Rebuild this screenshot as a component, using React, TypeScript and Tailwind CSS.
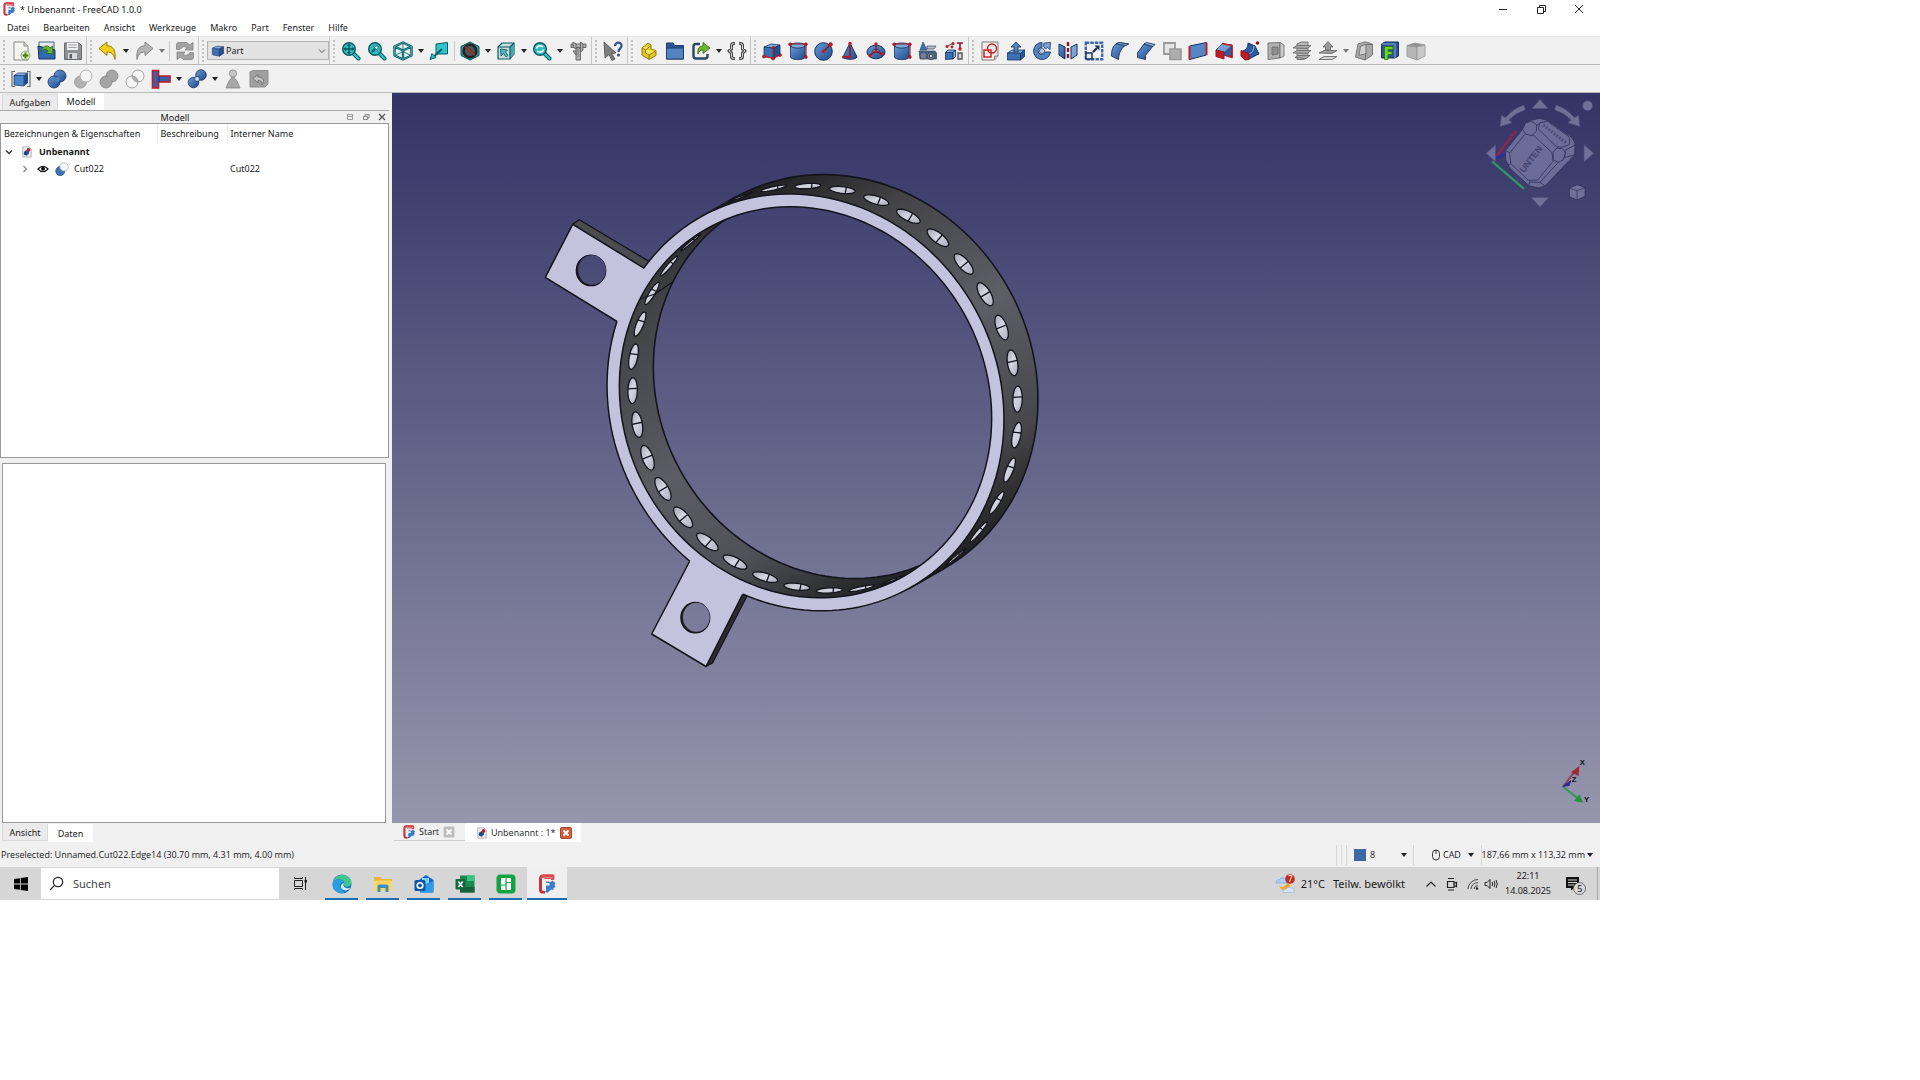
import React from "react";

const B = "#3d70b2";
const D = "#16335f";
const L = "#7dabdd";
const R = "#c01c28";
const RD = "#8f1420";
const T = "#16a3a8";
const TD = "#0b5a60";
const G = "#9a9a9a";
const GD = "#6e6e6e";

function Ic({ children, box = "0 0 20 20", className = "size-5" }: { children: React.ReactNode; box?: string; className?: string }) {
  return (
    <svg viewBox={box} className={className} aria-hidden="true">
      {children}
    </svg>
  );
}

function CubeShape({ a = L, b = B, c = "#24508e", s = D }: { a?: string; b?: string; c?: string; s?: string }) {
  return (
    <g stroke={s} strokeWidth="0.8" strokeLinejoin="round">
      <path d="M2 6 L12 7 L12 17.500 L2 15.500 Z" fill={b} />
      <path d="M2 6 L9 3 L18 4 L12 7 Z" fill={a} />
      <path d="M12 7 L18 4 L18 13.500 L12 17.500 Z" fill={c} />
    </g>
  );
}

function CylShape() {
  return (
    <g stroke={D} strokeWidth="0.8">
      <path d="M2.500 5 V16 C2.500 19.500 17 19.500 17 16 V5" fill="url(#icoBlue)" />
      <ellipse cx="9.750" cy="4.500" rx="7.250" ry="2.600" fill={L} />
      <path d="M2 3 H18 V16" stroke={RD} strokeWidth="1.100" fill="none" />
      <g fill={R} stroke={RD} strokeWidth="0.500">
        <circle cx="2.200" cy="3.300" r="1.600" />
        <circle cx="17.800" cy="3.300" r="1.600" />
        <circle cx="17.800" cy="16" r="1.600" />
      </g>
    </g>
  );
}

function Magnifier({ children }: { children?: React.ReactNode }) {
  return (
    <g>
      <path d="M12 12 L17.500 17.500" stroke={TD} strokeWidth="4" strokeLinecap="round" />
      <path d="M12 12 L17.500 17.500" stroke="#2cc4c8" strokeWidth="2.200" strokeLinecap="round" />
      <circle cx="8" cy="8" r="6.300" fill="#33b9bd" stroke={TD} strokeWidth="1.400" />
      {children}
    </g>
  );
}

function Fc() {
  return (
    <g strokeLinejoin="round">
      <path d="M16 2 H6 Q4 2 3.500 4 V16 Q3.500 18 5.500 18 H8" fill="none" stroke="#c8323c" strokeWidth="3" />
      <path d="M3.500 5 L6 1.500 H16.500 V5 H8 V8 H12" fill="none" stroke="#dc4c50" strokeWidth="1.800" />
      <path d="M8.500 8 H14 L15.500 6.500 L17 8 L18.500 9 L17.500 11 L18.500 13 L16.500 14 L16.500 16 L14 15.500 L12 17.500 L11 18.500 H8.500 Z" fill="#3b7cc9" />
      <path d="M6.500 5 H14 V7.500 H9 V9 H12.500 V11.500 H9 V17 H6.500 Z" fill="#f1f1f6" />
    </g>
  );
}

function Doc() {
  return (
    <g>
      <path d="M3 1.500 H13 L17 5 V18.500 H3 Z" fill="#eef0f4" stroke="#84888f" />
      <path d="M6 9 L10 7 L13 9 V13 L9 16 L6 14 Z" fill="#2d4f94" stroke={D} strokeWidth="0.600" />
      <circle cx="12.500" cy="6.500" r="3" fill={R} />
      <circle cx="7.500" cy="12" r="3" fill="#274684" />
    </g>
  );
}

const I: Record<string, React.ReactNode> = {
  new: (
    <g>
      <path d="M3 1 H13 L17 5 V19 H3 Z" fill="#f4f4f2" stroke="#8a8c88" />
      <path d="M13 1 V5 H17" fill="#d4d4d0" stroke="#8a8c88" />
      <circle cx="14.500" cy="14.500" r="4.500" fill="#dfeec8" stroke="#76924a" strokeWidth="0.700" />
      <path d="M14.500 11.500 V17.500 M11.500 14.500 H17.500" stroke="#4e7d16" strokeWidth="2" />
    </g>
  ),
  open: (
    <g>
      <path d="M2 1 H17 V10 H2 Z" fill="#e8ecf0" stroke="#44688c" />
      <path d="M1 5 L2 18 H18 V9 Z" fill="#2f69b0" stroke={D} />
      <path d="M4 11 C5 5 11 3 13 7 L15.500 5 L16 13 L9 12 L11 10 C9 7 6 8 4 11 Z" fill="#67b32e" stroke="#2c6410" strokeWidth="0.800" />
    </g>
  ),
  save: (
    <g>
      <path d="M1.500 2 H16 L18.500 4.500 V18.500 H1.500 Z" fill="#8e9094" stroke="#66686c" />
      <path d="M4 2 H15 V9 H4 Z" fill="#efefef" />
      <path d="M5.500 4 H13.500 M5.500 6.500 H13.500" stroke="#a0a0a0" />
      <path d="M5 12 H14 V18 H5 Z" fill="#d9d9d9" />
      <path d="M6.500 13 H9 V17.500 H6.500 Z" fill="#5c5e62" />
    </g>
  ),
  undo: <path d="M1 7.500 L9 1 V4.800 C15 4.800 18 9 17 18.500 C15.500 13 13.500 11 9 11 V14.500 Z" fill="#f0cf1d" stroke="#97800a" strokeLinejoin="round" />,
  redo: <path d="M19 7.500 L11 1 V4.800 C5 4.800 2 9 3 18.500 C4.500 13 6.500 11 11 11 V14.500 Z" fill="#b4b4b4" stroke="#888" strokeLinejoin="round" />,
  refresh: (
    <g fill="#a3a3a3" stroke="#828282" strokeWidth="0.800">
      <path d="M1.500 8.500 V3.500 Q1.500 1.500 4 1.500 H12 L14.500 4 L18 1.500 V9 H10 L12 6.500 Q8 4 5 8.500 Z" />
      <path d="M18.500 11.500 V16.500 Q18.500 18.500 16 18.500 H8 L5.500 16 L2 18.500 V11 H10 L8 13.500 Q12 16 15 11.500 Z" />
    </g>
  ),
  fit: (
    <Magnifier>
      <path d="M8 3.500 V12.500 M3.500 8 H12.500" stroke={TD} strokeWidth="1.300" />
      <path d="M8 2.500 L10 5 H6 Z M8 13.500 L10 11 H6 Z M2.500 8 L5 6 V10 Z M13.500 8 L11 6 V10 Z" fill={TD} />
    </Magnifier>
  ),
  fitsel: (
    <Magnifier>
      <path d="M5 11 L8 8" stroke={TD} strokeWidth="1.800" />
      <path d="M11 5 L10.500 9.500 L6.500 5.500 Z" fill="#e8ffff" stroke={TD} strokeWidth="0.700" />
    </Magnifier>
  ),
  iso: (
    <g fill="none" stroke={TD} strokeLinejoin="round">
      <path d="M1.500 5.500 L10 1.500 L18.500 5.500 V14.500 L10 18.500 L1.500 14.500 Z" fill="#e4f1f1" />
      <path d="M1.500 5.500 L10 1.500 L18.500 5.500 V14.500 L10 18.500 L1.500 14.500 Z M1.500 5.500 L10 9.500 L18.500 5.500 M10 9.500 V18.500" strokeWidth="2.400" />
      <path d="M1.500 5.500 L10 1.500 L18.500 5.500 V14.500 L10 18.500 L1.500 14.500 Z M1.500 5.500 L10 9.500 L18.500 5.500 M10 9.500 V18.500" stroke="#48bfc1" strokeWidth="0.700" />
      <path d="M10 2 V9 M3 14 L10 10.500 L17 14" strokeWidth="0.800" />
    </g>
  ),
  viewsel: (
    <g strokeLinejoin="round">
      <path d="M7 3 L18.500 1.500 V13 H7 Z" fill="#2bc5cb" stroke={TD} />
      <path d="M13 8 L5 15.500" stroke={TD} strokeWidth="1.800" />
      <path d="M1 18.500 L3 12.500 L7 16.500 Z" fill="#2bc5cb" stroke={TD} />
    </g>
  ),
  noentry: (
    <g>
      <path d="M1 5.500 L10 1 L19 5.500 V14.500 L10 19 L1 14.500 Z" fill="#2f9195" stroke={TD} />
      <circle cx="10" cy="10" r="6.300" fill="#47575a" stroke="#262223" strokeWidth="2.600" />
      <path d="M5.500 6 L14.500 14" stroke="#7f2a2a" strokeWidth="2.800" />
      <path d="M5.500 6 L14.500 14" stroke="#b5443d" strokeWidth="1" />
    </g>
  ),
  boxsel: (
    <g strokeLinejoin="round">
      <path d="M2 6 L6 2 H18 V13 L14 18 H2 Z" fill="#c7dcdc" stroke={TD} strokeWidth="1.200" />
      <path d="M14 6 L18 2 V13 L14 18 Z" fill="#4aa9ac" />
      <path d="M2 6 H14 V18 M14 6 L18 2" fill="none" stroke={TD} strokeWidth="1.200" />
      <path d="M4.500 8 L11.500 9 L9.500 11 L12 14.500 L10 16 L7.500 12.500 L5 15 Z" fill="#55b5b7" stroke={TD} strokeWidth="0.800" />
    </g>
  ),
  sync: (
    <Magnifier>
      <path d="M4.500 7.500 C5 4.500 9 4 11 6 M11.500 8.500 C11 11.500 7 12 5 10" fill="none" stroke="#e8ffff" strokeWidth="1.700" />
    </Magnifier>
  ),
  caliper: (
    <g fill="#b0b0b0" stroke="#5f5f5f" strokeWidth="0.900">
      <path d="M8 7 H12.500 V19 H8 Z" />
      <path d="M3 3 H18 V6.500 H3 Z" />
      <path d="M5 1 L8 3 V8 L5 6 Z M12.500 1 L15 3 V9 L12.500 11 Z M5 10 H8 V14 Z" />
      <path d="M9.500 9 H11 M9.500 11 H11 M9.500 13 H11 M9.500 15 H11" />
    </g>
  ),
  whats: (
    <g>
      <path d="M1 1 L13 12 L8.500 12.500 L12 18 L9 19.500 L6 13.500 L2 17 Z" fill="#7d7d7d" stroke="#4e4e4e" strokeWidth="0.800" />
      <path d="M12 5 C12 0.500 19 0.500 18.500 5 C18.300 7.500 15.500 7.500 15.500 11" fill="none" stroke="#33518a" strokeWidth="2.200" />
      <circle cx="15.500" cy="14" r="1.500" fill="#33518a" />
    </g>
  ),
  part: (
    <g stroke="#857208" strokeWidth="0.900" strokeLinejoin="round">
      <path d="M3 7 L9 2 L12 4 V8 L17 9.500 V14.500 L10 18.500 L3 14 Z" fill="#e3c822" />
      <path d="M3 7 L6.500 9 L12 4.500 M6.500 9 V12 L10 14 L17 9.800 M10 14 V18.500" fill="#f8e75c" />
    </g>
  ),
  folder: (
    <g>
      <path d="M1.500 2 H8 L9.500 4.500 H18.500 V18 H1.500 Z" fill="#2b5592" stroke="#1d3f70" />
      <path d="M1.500 7 H18.500 V18 H1.500 Z" fill="#5583c0" stroke="#1d3f70" />
    </g>
  ),
  link: (
    <g>
      <path d="M9 3 H5 Q2.500 3 2.500 5.500 V15 Q2.500 17.500 5 17.500 H14 Q16.500 17.500 16.500 15 V13" fill="none" stroke="#2e4468" strokeWidth="2.400" />
      <path d="M7 13 C6 7 9 5 12 5 V1.500 L19 7 L12 12.500 V9 C9.500 9 8 10 7 13 Z" fill="#6fb92e" stroke="#35650f" strokeWidth="0.800" />
    </g>
  ),
  braces: (
    <g fill="none" strokeLinejoin="round">
      <path d="M8 2.500 H6.500 Q4.500 2.500 4.500 4.500 V8 L2 10 L4.500 12 V15.500 Q4.500 17.500 6.500 17.500 H8 M12 2.500 H13.500 Q15.500 2.500 15.500 4.500 V8 L18 10 L15.500 12 V15.500 Q15.500 17.500 13.500 17.500 H12" stroke="#444" strokeWidth="3" />
      <path d="M7.500 2.500 H6.500 Q4.500 2.500 4.500 4.500 V8 L2 10 L4.500 12 V15.500 Q4.500 17.500 6.500 17.500 H7.500 M12.500 2.500 H13.500 Q15.500 2.500 15.500 4.500 V8 L18 10 L15.500 12 V15.500 Q15.500 17.500 13.500 17.500 H12.500" stroke="#d8d8d8" strokeWidth="1" />
    </g>
  ),
  pcube: (
    <g>
      <CubeShape />
      <path d="M2 15.500 L11 17 L18.500 14 M11 17 V7" fill="none" stroke={R} />
      <g fill={R} stroke={RD} strokeWidth="0.500">
        <circle cx="2" cy="15.500" r="1.600" />
        <circle cx="11" cy="17.500" r="1.600" />
        <circle cx="18" cy="14" r="1.600" />
        <circle cx="11.500" cy="6.500" r="1.200" />
      </g>
    </g>
  ),
  cyl: <CylShape />,
  sphere: (
    <g>
      <circle cx="9.500" cy="10.500" r="8.800" fill="url(#icoBlue)" stroke={D} />
      <path d="M9.500 10.500 L16.500 3.500" stroke={RD} strokeWidth="1.600" />
      <circle cx="9.500" cy="10.500" r="1.800" fill={R} />
      <circle cx="16.500" cy="3.500" r="2" fill={R} stroke={RD} strokeWidth="0.500" />
    </g>
  ),
  cone: (
    <g>
      <path d="M10 2 L3 16 C4 19 16 19 17 16 Z" fill="url(#icoBlue)" stroke={D} />
      <path d="M10 2 V16 H3.500" stroke={RD} strokeWidth="1.500" fill="none" />
      <circle cx="10" cy="2.500" r="1.700" fill={R} />
      <circle cx="10" cy="16" r="1.700" fill={R} />
      <circle cx="3.500" cy="16.300" r="1.500" fill={R} />
    </g>
  ),
  torus: (
    <g>
      <ellipse cx="10" cy="11" rx="9" ry="6.800" fill="url(#icoBlue)" stroke={D} />
      <ellipse cx="10" cy="10" rx="3.500" ry="1.500" fill="#b9c8dd" stroke={D} />
      <path d="M10 3 V10 L4 14 M10 10 L16 13" stroke={RD} strokeWidth="1.400" fill="none" />
      <g fill={R}>
        <circle cx="10" cy="3" r="1.700" />
        <circle cx="10" cy="10" r="1.500" />
        <circle cx="4" cy="14.500" r="1.700" />
        <circle cx="16.500" cy="13" r="1.700" />
      </g>
    </g>
  ),
  prims: (
    <g strokeWidth="0.700" stroke="#3a4756">
      <path d="M5 1 L2 9 H9 Z" fill={B} />
      <path d="M9 5 H18 L16 8 H9 Z" fill="#b8c0c6" />
      <path d="M1 10 H17 L18.500 12 V18 H2 Z" fill="#43699c" />
      <circle cx="5.500" cy="14.500" r="3.500" fill="#6c7f96" />
      <circle cx="13" cy="15" r="3.800" fill="#66727e" />
      <circle cx="13" cy="15" r="1.600" fill="#c9ced3" />
    </g>
  ),
  shapebuilder: (
    <g>
      <path d="M1.500 11.500 L9 11 V18 L1.500 18.500 Z" fill={B} stroke={D} strokeWidth="0.800" />
      <path d="M1.500 11.500 L4 9 H11.500 L9 11.500 Z M9 11.500 L11.500 9 V15.500 L9 18 Z" fill={L} stroke={D} strokeWidth="0.800" />
      <path d="M13 2 H19 M16 2 V7" stroke={RD} strokeWidth="1.600" />
      <path d="M14 12 H18 V18 H14 Z" fill="#d5d7d9" stroke="#555" strokeWidth="1.400" />
      <path d="M3 5 L9.500 2.500" stroke="#666" strokeWidth="1.200" />
      <g fill={R}>
        <circle cx="3" cy="5.500" r="1.500" />
        <circle cx="9" cy="2.500" r="1.500" />
        <circle cx="8" cy="6" r="1.400" />
        <circle cx="16" cy="8" r="1.700" />
      </g>
    </g>
  ),
  sketch: (
    <g>
      <path d="M2 1 H18 V15 L14.500 19 H2 Z" fill="#f6eceb" stroke="#7b7b7b" />
      <path d="M18 15 H14.500 V19" fill="#cfcfcf" stroke="#7b7b7b" />
      <circle cx="12" cy="7.500" r="4.500" fill="none" stroke="#c9282c" strokeWidth="1.500" />
      <path d="M4 9 H11 V16 H4 Z" fill="none" stroke="#c9282c" strokeWidth="1.500" />
    </g>
  ),
  extrude: (
    <g stroke={D} strokeWidth="0.800" strokeLinejoin="round">
      <path d="M1.500 12 L6 9 H18.500 L14.500 12.500 Z" fill={L} />
      <path d="M1.500 12 H14.500 V19 H1.500 Z" fill={B} />
      <path d="M14.500 12.500 L18.500 9 V15.500 L14.500 19 Z" fill="#2a5796" />
      <path d="M10 1 L15 6 H12 V11 H8 V6 H5 Z" fill="#4d82c0" />
    </g>
  ),
  revolve: (
    <g>
      <path d="M10 1.500 A8.500 8.500 0 1 0 18.500 11 L13 11 A3.500 3.500 0 1 1 10 6.500 Z" fill="#5386c2" stroke={D} strokeWidth="0.900" />
      <path d="M12 2 L18.500 1.500 L18 8.500 L15.500 6.500 L13.500 8 L11.500 5 Z" fill="#7ba6d8" stroke={D} strokeWidth="0.800" />
      <circle cx="10" cy="10" r="2.500" fill="#c5d4e6" stroke={D} strokeWidth="0.700" />
    </g>
  ),
  mirror: (
    <g>
      <path d="M1 3 L7 6 V18 L1 14 Z" fill="url(#icoBlue)" stroke={D} />
      <path d="M19 3 L13 6 V18 L19 14 Z" fill="#7ba6d8" stroke={D} />
      <path d="M10 1 V19" stroke={RD} strokeWidth="2.400" strokeDasharray="4 2" />
    </g>
  ),
  scale: (
    <g>
      <path d="M1.800 1.800 H18.200 V18.200 H1.800 Z" fill="none" stroke="#3f6aa8" strokeWidth="2.400" strokeDasharray="3.500 1" />
      <path d="M2 12 H8 V18 H2 Z" fill="#e9edf2" stroke={D} strokeWidth="1.500" />
      <path d="M9 11 L13 7" stroke={D} strokeWidth="2.400" />
      <path d="M10.500 4.500 H15.500 V9.500 Z" fill={D} />
    </g>
  ),
  fillet: (
    <g stroke={D} strokeWidth="0.900" strokeLinejoin="round">
      <path d="M1.500 15 C1.500 7 4 3 9 1.500 L18.500 3 C13 5 9 9 8.500 18.500 Z" fill="url(#icoBlue)" />
      <path d="M9 1.500 L18.500 3 L16 4.500 L6 3 Z" fill="#9dbde2" />
    </g>
  ),
  chamfer: (
    <g stroke={D} strokeWidth="0.900" strokeLinejoin="round">
      <path d="M1.500 12 L8 3 L17 5 L9.500 14.500 V18.500 L1.500 16.500 Z" fill="url(#icoBlue)" />
      <path d="M8 3 L10.500 1.500 L19 3.500 L17 5.500 Z" fill="#9dbde2" />
    </g>
  ),
  face: (
    <g>
      <path d="M2 2 H13 V13 H2 Z" fill="#e4e4e4" stroke={G} strokeWidth="1.800" />
      <path d="M8 8 H19 V18.500 H8 Z" fill="#adadad" stroke={G} strokeWidth="1.600" />
    </g>
  ),
  ruled: (
    <g>
      <path d="M1.500 5 L18.500 1.500 V14 L1.500 18.500 Z" fill="#5587c6" stroke={D} />
      <path d="M1.500 5 V18.500 M18.500 1.500 V14" stroke={R} strokeWidth="2" />
    </g>
  ),
  loft: (
    <g strokeLinejoin="round">
      <path d="M2 9 L8 3 L18 4 V16 L10 14 Z" fill="#2c5ba0" stroke={D} />
      <path d="M8 3 L18 4 L10 11 L2 9 Z" fill="#7ba0cf" />
      <path d="M2 9 L10 11 V18 L2 15.500 Z" fill={R} stroke={RD} />
      <path d="M8 2.500 L18 4.500 V16.500 L12 14.500" fill="none" stroke={R} strokeWidth="1.600" />
    </g>
  ),
  sweep: (
    <g strokeLinejoin="round">
      <path d="M3 10 C7 8 8 6 8 2 L15 5 L19 13 C16 14 13 16 9 18 Z" fill="#2c5ba0" stroke={D} />
      <path d="M9 13 C12 12 14 9 14 5" stroke="#87aede" fill="none" />
      <path d="M1 9.500 L9 12.500 V18.500 L5 19 L1 15 Z" fill={R} stroke={RD} />
      <circle cx="17.500" cy="2" r="1.800" fill={RD} />
    </g>
  ),
  section: (
    <g stroke={GD} strokeWidth="0.900">
      <path d="M2 2 L14 1.500 V17 L2 18.500 Z" fill="#b0b0b0" />
      <path d="M14 1.500 L18 4 V15 L14 17 Z" fill="#cdcdcd" />
      <path d="M6 6 H12 V13 L6 14 Z" fill="#8f8f8f" />
    </g>
  ),
  cross: (
    <g stroke={GD} strokeWidth="0.900">
      <path d="M5 3 L9 1 H16 V15 L12 18.500 H5 Z" fill="#b8b8b8" />
      <path d="M1 7 L5 4.500 H19 L15 7.500 Z M1 12 L5 9.500 H19 L15 12.500 Z M3 16.500 L6 14.500 H18 L14 17.500 Z" fill="#a6a6a6" />
    </g>
  ),
  offset: (
    <g stroke={GD} strokeWidth="0.900">
      <path d="M10 0.500 L15 6 H12.500 V9 H7.500 V6 H5 Z" fill={G} />
      <path d="M1 12 L6 9.500 H19 L14 12.500 Z" fill="#9e9e9e" />
      <path d="M1 18.500 L6 15.500 H19 L14 18.500 Z" fill="#d2d2d2" />
    </g>
  ),
  thick: (
    <g stroke={GD} strokeWidth="0.900" strokeLinejoin="round">
      <path d="M4 3 L11 0.800 L18.500 3 V14 L11 19 L1.500 16 Z" fill="#a9a9a9" />
      <path d="M6.500 5 L12 3.500 V12.500 L5 14.500 Z" fill="#d0d0d0" />
      <path d="M12 3.500 L18 3.500 M12 12.500 L11 19" />
    </g>
  ),
  projface: (
    <g>
      <path d="M1.500 3 L5 1 H18.500 V15 L15 17 H1.500 Z" fill="#2c5793" stroke={D} />
      <path d="M1.500 3 H15 V17" stroke="#88a9d4" fill="none" />
      <path d="M4.500 5.500 H13 V8.500 H8 V10.500 H12 V13.500 H8 V18.500 H4.500 Z" fill="#6ed321" stroke="#2d7309" strokeWidth="0.800" />
    </g>
  ),
  gcube: (
    <g stroke={G} strokeWidth="0.900" strokeLinejoin="round">
      <path d="M1 4.500 L11 6 V19 L1 15.500 Z" fill="#b6b6b6" />
      <path d="M1 4.500 L9 2 L19 4 L11 6 Z" fill="#8e8e8e" />
      <path d="M11 6 L19 4 V15 L11 19 Z" fill="#c9c9c9" />
    </g>
  ),
  compound: (
    <g>
      <path d="M4 2.500 H1 V17.500 H4 M16 2.500 H19 V17.500 H16" fill="none" stroke="#6c6c6c" strokeWidth="1.200" />
      <path d="M3 6.500 H13 V17 L3 16 Z" fill="#4684cc" stroke={D} strokeWidth="0.700" />
      <path d="M3 6.500 L7 4 H17 L13 6.500 Z" fill="#8ab5e6" stroke={D} strokeWidth="0.700" />
      <path d="M13 6.500 L17 4 V14 L13 17 Z" fill="#214c86" />
    </g>
  ),
  boolean: (
    <g stroke={D} strokeWidth="0.800">
      <circle cx="13" cy="7" r="6" fill="url(#icoBlue)" />
      <circle cx="7" cy="13" r="6" fill="url(#icoBlue)" />
      <path d="M9 9 L12 12" stroke="#4d83c3" strokeWidth="4" />
    </g>
  ),
  cut: (
    <g strokeWidth="0.900">
      <circle cx="7.500" cy="13" r="6" fill="#b2b2b2" stroke={G} />
      <circle cx="13" cy="7" r="6" fill="#f4f4f4" stroke="#a8a8a8" />
    </g>
  ),
  union: (
    <g stroke="#8b8b8b" strokeWidth="0.900">
      <circle cx="13" cy="7" r="6" fill="#a5a5a5" />
      <circle cx="7" cy="13" r="6" fill="#a5a5a5" />
      <path d="M9 9 L12 12" stroke="#a5a5a5" strokeWidth="5" />
    </g>
  ),
  common: (
    <g stroke="#9a9a9a" strokeWidth="0.900">
      <circle cx="13" cy="7" r="6" fill="#f4f4f4" />
      <circle cx="7" cy="13" r="6" fill="#f4f4f4" />
      <path d="M7.100 7 A6 6 0 0 1 12.900 13 A6 6 0 0 1 7.100 7 Z" fill="#b2b2b2" />
    </g>
  ),
  pipe: (
    <g>
      <path d="M1.500 1.500 H7.500 V7 H19 V13 H7.500 V19 H1.500 Z" fill="#3c5fa0" stroke={R} strokeWidth="1.700" />
      <path d="M8 7 V13" stroke={D} />
    </g>
  ),
  split: (
    <g stroke={D} strokeWidth="0.800">
      <circle cx="14" cy="6" r="5.300" fill="url(#icoBlue)" />
      <circle cx="6.500" cy="13.500" r="5.300" fill="url(#icoBlue)" />
      <path d="M8 8 C12 7 13 8 12 12 C9 13 7 12 8 8 Z" fill="#cfe0f5" />
    </g>
  ),
  check: (
    <g fill="#a8a8a8" stroke="#848484" strokeWidth="0.800">
      <path d="M10 7 L14 12 L17 19 H3 L6 12 Z" />
      <circle cx="10" cy="4.500" r="3.600" fill="#c6c6c6" />
    </g>
  ),
  defeature: (
    <g>
      <path d="M1 3 L4 1.500 H19 V15 L16 18 H1 Z" fill="#a0a0a0" stroke="#8f8f8f" />
      <path d="M4 9.500 L9 5.500 V8 C14 8 16 11 13 16 C13 12.500 12 11.500 9 11.500 V14 Z" fill="#c4c4c4" stroke="#6a6a6a" strokeWidth="0.800" />
    </g>
  ),
};

function Tool({ n, label, arrow, dim }: { n: string; label: string; arrow?: boolean; dim?: boolean }) {
  return (
    <div className="flex shrink-0 items-center">
      <button aria-label={label} className="flex h-6 w-[26px] items-center justify-center">
        <Ic>{I[n]}</Ic>
      </button>
      {arrow && (
        <button aria-label={label + " Menü"} className="flex h-6 w-[10px] items-center justify-center">
          <Arrow dim={dim} />
        </button>
      )}
    </div>
  );
}

function Arrow({ dim }: { dim?: boolean }) {
  return (
    <svg viewBox="0 0 6 4" className="h-1 w-1.5 shrink-0" aria-hidden="true">
      <path d="M0 0 H6 L3 4 Z" fill={dim ? "#777" : "#222"} />
    </svg>
  );
}

function Group({ children, pad, last }: { children: React.ReactNode; pad?: boolean; last?: boolean }) {
  return (
    <div className={last ? "flex shrink-0 items-center" : pad ? "flex shrink-0 items-center border-r border-[#c6c6c6] pr-px" : "flex shrink-0 items-center border-r border-[#c6c6c6]"}>
      <div className="flex w-2 justify-center">
        <div className="h-[22px] w-0.5 border-l-2 border-dotted border-[#c2c2c2]" />
      </div>
      {children}
    </div>
  );
}

const Sep = () => <div className="mx-0.5 h-5 w-px bg-[#c9c9c9]" />;

const C = { x: 805.5, y: 402.3 };
const A = { x: 104.2, y: 185.7 };
const M = { x: 168.9, y: -94.7 };
const S = { x: 34, y: -19.3 };
const K = 0.938;

function ellipsePath(k: number, dx: number, dy: number) {
  const pts: string[] = [];
  for (let i = 0; i < 180; i++) {
    const a = (i * Math.PI) / 90;
    const x = C.x + dx + k * (A.x * Math.cos(a) + M.x * Math.sin(a));
    const y = C.y + dy + k * (A.y * Math.cos(a) + M.y * Math.sin(a));
    pts.push(x.toFixed(2) + " " + y.toFixed(2));
  }
  return "M" + pts.join(" L") + " Z";
}

const frontOuter = ellipsePath(1, 0, 0);
const backOuter = ellipsePath(1, S.x, S.y);
const frontInner = ellipsePath(K, 0, 0);
const backInner = ellipsePath(K, S.x, S.y);
const all = "M300 0 H1700 V900 H300 Z ";
const hull = `M${C.x + A.x} ${C.y + A.y} L${C.x + A.x + S.x} ${C.y + A.y + S.y} L${C.x - A.x + S.x} ${C.y - A.y + S.y} L${C.x - A.x} ${C.y - A.y} Z`;

function holes(inside: boolean) {
  const out: { d: string; seam: string }[] = [];
  const k = inside ? K : 1;
  for (let i = 0; i < 18; i++) {
    const deg = 1.7 + i * 10 + (inside ? 180 : 0);
    const a = (deg * Math.PI) / 180;
    const f = inside ? 0.38 : 0.41;
    const cx = C.x + f * S.x + k * (A.x * Math.cos(a) + M.x * Math.sin(a));
    const cy = C.y + f * S.y + k * (A.y * Math.cos(a) + M.y * Math.sin(a));
    const r = 13;
    const tx = (r / 212.9) * (-A.x * Math.sin(a) + M.x * Math.cos(a));
    const ty = (r / 212.9) * (-A.y * Math.sin(a) + M.y * Math.cos(a));
    const sx = (r / 94) * S.x;
    const sy = (r / 94) * S.y;
    const pts: string[] = [];
    for (let j = 0; j < 32; j++) {
      const b = (j * Math.PI) / 16;
      pts.push((cx + tx * Math.cos(b) + sx * Math.sin(b)).toFixed(2) + " " + (cy + ty * Math.cos(b) + sy * Math.sin(b)).toFixed(2));
    }
    const tt = Math.hypot(tx, ty);
    const q = (4 * tx - 2.2 * ty) / (tt * tt);
    const nx = -ty / tt;
    const ny = tx / tt;
    const det = tx * sy - ty * sx;
    const al = (nx * sy - ny * sx) / det;
    const be = (tx * ny - ty * nx) / det;
    const w = Math.sqrt(Math.max(0, 1 - q * q)) / Math.hypot(al, be);
    const lx = cx + q * tx;
    const ly = cy + q * ty;
    out.push({
      d: "M" + pts.join(" L") + " Z",
      seam: `M${(lx - w * nx).toFixed(2)} ${(ly - w * ny).toFixed(2)} L${(lx + w * nx).toFixed(2)} ${(ly + w * ny).toFixed(2)}`,
    });
  }
  return out;
}

function Holes({ inside }: { inside: boolean }) {
  return (
    <g stroke="#14141c" strokeWidth="1.300">
      {holes(inside).map((h) => (
        <g key={h.d}>
          <path d={h.d} fill="url(#holeFill)" />
          <path d={h.seam} fill="none" />
        </g>
      ))}
    </g>
  );
}

function Scene() {
  return (
    <svg viewBox="392 93 1208 730" preserveAspectRatio="none" className="absolute inset-0 size-full" role="img" aria-label="3D-Ansicht">
      <defs>
        <linearGradient id="sky" gradientUnits="userSpaceOnUse" x1="0" y1="93" x2="0" y2="823">
          <stop offset="0" stopColor="#333366" />
          <stop offset="1" stopColor="#9696ad" />
        </linearGradient>
        <linearGradient id="steel" gradientUnits="userSpaceOnUse" x1="701" y1="216" x2="910" y2="588">
          <stop offset="0" stopColor="#202022" />
          <stop offset="0.200" stopColor="#454549" />
          <stop offset="0.500" stopColor="#5d5e66" />
          <stop offset="0.800" stopColor="#47474b" />
          <stop offset="1" stopColor="#202022" />
        </linearGradient>
        <linearGradient id="steelIn" gradientUnits="userSpaceOnUse" x1="701" y1="216" x2="910" y2="588">
          <stop offset="0" stopColor="#2a2a2c" />
          <stop offset="0.120" stopColor="#414245" />
          <stop offset="0.500" stopColor="#5b5c64" />
          <stop offset="0.750" stopColor="#505158" />
          <stop offset="1" stopColor="#1c1c1e" />
        </linearGradient>
        <linearGradient id="holeFill" x1="0" y1="0" x2="1" y2="1">
          <stop offset="0" stopColor="#a3a3b2" />
          <stop offset="0.450" stopColor="#d6d6e2" />
          <stop offset="1" stopColor="#adadbc" />
        </linearGradient>
        <clipPath id="outside">
          <path d={all + frontOuter} clipRule="evenodd" />
        </clipPath>
        <clipPath id="inside">
          <path d={frontInner} />
        </clipPath>
        <clipPath id="notBackInner">
          <path d={all + backInner} clipRule="evenodd" />
        </clipPath>
      </defs>
      <rect x="392" y="93" width="1208" height="730" fill="url(#sky)" />

      <g stroke="#14141c" strokeWidth="1.300" strokeLinejoin="round">
        <path d="M572.700 224.300 L579.300 219.700 L650 262 L644 268.500 Z" fill="#4b4c50" />
        <path d="M706 666.500 L712.500 663 L747 596 L742.500 594.500 Z" fill="#2c2c30" />
        <g clipPath="url(#outside)">
          <path d={hull} fill="url(#steel)" strokeWidth="1.600" />
          <path d={backOuter} fill="url(#steel)" strokeWidth="1.600" />
          <path d={hull} fill="url(#steel)" stroke="none" />
          <Holes inside={false} />
        </g>
        <g clipPath="url(#inside)">
          <path d={all + backInner} fillRule="evenodd" fill="url(#steelIn)" strokeWidth="1.600" />
          <g clipPath="url(#notBackInner)">
            <Holes inside />
            <path d="M640 299 L655 294 L674 281" fill="none" />
          </g>
        </g>
        <path d={frontOuter + " " + frontInner} fillRule="evenodd" fill="#c4c3de" strokeWidth="1.500" />
        <path d="M644.300 268.300 L572.700 224.300 L545.300 277.300 L617 321.500 L623 323 L649 271 Z" fill="#c4c3de" stroke="none" />
        <path d="M644.300 268.300 L572.700 224.300 L545.300 277.300 L617 321.500" fill="none" strokeWidth="1.500" />
        <path d="M689.500 561.500 L651.700 634 L706 666.500 L742.500 594.500 L744 588 L694 557 Z" fill="#c4c3de" stroke="none" />
        <path d="M689.500 561.500 L651.700 634 L706 666.500 L742.500 594.500" fill="none" strokeWidth="1.500" />
        <ellipse cx="591" cy="270.400" rx="14.700" ry="15.300" fill="#1d1d22" />
        <ellipse cx="592" cy="270" rx="13.800" ry="14.700" fill="url(#sky)" stroke="none" />
        <ellipse cx="695.300" cy="617.700" rx="14.400" ry="15.200" fill="#1d1d22" />
        <ellipse cx="696.300" cy="617.200" rx="13.400" ry="14.500" fill="url(#sky)" stroke="none" />
      </g>

      <g transform="translate(1460 90) scale(0.3333)" strokeLinejoin="round">
        <path d="M98 212 L168 122" stroke="#93264f" strokeWidth="7" />
        <path d="M98 208 L142 190" stroke="#2c2ca0" strokeWidth="7" />
        <path d="M96 214 L192 297" stroke="#2f9466" strokeWidth="7" />
        <g fill="#6f7099" stroke="#474777" strokeWidth="2">
          <path d="M240 28 L265 56 H215 Z M240 352 L213 322 H267 Z M78 190 L107 164 V216 Z M402 190 L372 164 V216 Z" />
          <path d="M192 45 Q158 56 137 83 L124 75 L120 110 L157 98 L147 90 Q166 69 196 60 Z" />
          <path d="M288 45 Q322 56 343 83 L356 75 L360 110 L323 98 L333 90 Q314 69 284 60 Z" />
          <circle cx="383" cy="47" r="15" />
          <path d="M352 284 L375 293 V319 L351 330 L328 320 V294 Z" stroke="#2e2e52" />
          <path d="M328 294 L351 302 L375 293 M351 302 V330" stroke="#2e2e52" fill="none" />
        </g>
        <g fill="#6b6c98" stroke="#32325c" strokeWidth="2.500">
          <path d="M208 92 L240 85 L264 92 L335 142 L345 160 L344 194 L255 288 L235 294 L207 287 L150 235 L137 210 L136 182 L188 118 Z" />
          <path d="M197 130 L223 138 L276 188 L279 214 L233 270 L205 271 L152 220 L149 189 Z" />
          <path d="M188 118 L197 98 L215 94 L231 105 L229 124 L215 137 L197 132 Z" />
          <path d="M240 98 L262 94 L328 141 L329 163 L306 172 L289 170 L235 117 Z" />
          <path d="M279 187 L291 174 L309 177 L317 190 L309 210 L295 217 L280 210 Z M317 180 L345 165 L344 194 L314 203 Z" />
          <path d="M207 287 L208 276 L240 277 L255 288 M152 222 L142 226 M240 277 L295 217 M149 189 L138 182 M230 108 L240 98" fill="none" />
        </g>
        <text x="0" y="0" transform="translate(192 250) rotate(-52)" fontSize="27" fontWeight="700" fill="#44446c" fontFamily="Liberation Sans, Arial, sans-serif">UNTEN</text>
        <path d="M250 105 L320 160" stroke="#50507c" strokeWidth="9" strokeDasharray="6 4" />
      </g>

      <g transform="translate(1200 740) scale(0.3333)">
        <path d="M1090 139 L1122 98" stroke="#8d4260" strokeWidth="6" />
        <path d="M1138 78 L1136 108 L1113 97 Z" fill="#a02830" />
        <path d="M1088 140 L1112 122 L1108 136 Z" fill="#2a2a90" stroke="#2a2a90" strokeWidth="3" />
        <path d="M1090 141 L1132 174" stroke="#2f9a55" strokeWidth="6" />
        <path d="M1150 188 L1122 183 L1138 163 Z" fill="#249040" />
        <g fontSize="23" fontWeight="700" fill="#111" fontFamily="Liberation Sans, Arial, sans-serif">
          <text x="1139" y="74">X</text>
          <text x="1115" y="125">Z</text>
          <text x="1152" y="187">Y</text>
        </g>
      </g>
    </svg>
  );
}

const menus = ["Datei", "Bearbeiten", "Ansicht", "Werkzeuge", "Makro", "Part", "Fenster", "Hilfe"];

const apps: { label: string; art: React.ReactNode }[] = [
  {
    label: "Microsoft Edge",
    art: (
      <g>
        <circle cx="10" cy="10" r="9.500" fill="#1b74c8" />
        <path d="M1 8 C3 0 15 -2 19 6 C20.500 10 17 13.500 13 12.500 C11 11.500 13 10 12 8 C9 4 3 5 1 8 Z" fill="#3fc78d" />
        <path d="M1 8 C5 4.500 10 5 12 8 C7 8 6 14 13 18.500 C6 21 0 16 0.600 9.500 Z" fill="#2a9fe0" />
        <path d="M12 9 C10 12 13 15.500 18.500 14 C16 17 12 17 10 15 C8 13 9 9.500 12 9 Z" fill="#d8eef8" />
      </g>
    ),
  },
  {
    label: "Explorer",
    art: (
      <g>
        <path d="M1 3 H7 L9 5 H19 V17 H1 Z" fill="#e9b53b" />
        <path d="M1 6.500 H19 V17 H1 Z" fill="#fbd766" />
        <path d="M4.500 18 V12.500 Q4.500 10.500 6.500 10.500 H13.500 Q15.500 10.500 15.500 12.500 V18 H12.500 V14 H7.500 V18 Z" fill="#3c8ec2" />
      </g>
    ),
  },
  {
    label: "Outlook",
    art: (
      <g>
        <path d="M5 6 L12 1 L19.500 6 V17 Q19.500 18.500 18 18.500 H6 Z" fill="#1568c0" />
        <path d="M8 4 L15 4 V12 H8 Z" fill="#7fd0f5" />
        <path d="M6 12 L19.500 7 V17 Q19.500 18.500 18 18.500 H6 Z" fill="#2d9be8" />
        <rect x="0.500" y="6" width="11" height="11" rx="1.500" fill="#0f53a6" />
        <circle cx="6" cy="11.500" r="2.800" fill="none" stroke="#fff" strokeWidth="1.600" />
      </g>
    ),
  },
  {
    label: "Excel",
    art: (
      <g>
        <path d="M5 1.500 H19.500 V18.500 H5 Z" fill="#1f8a50" />
        <path d="M12 1.500 H19.500 V7 H12 Z" fill="#38c483" />
        <path d="M5 13 H19.500 V18.500 H5 Z" fill="#14603a" />
        <rect x="0.500" y="5" width="10" height="10.500" rx="1" fill="#0f6a3a" />
        <path d="M3.300 7.500 L7.700 13 M7.700 7.500 L3.300 13" stroke="#fff" strokeWidth="1.500" />
      </g>
    ),
  },
  {
    label: "WindowsApp",
    art: (
      <g>
        <rect x="0.500" y="0.500" width="19" height="19" rx="4" fill="#12a344" />
        <rect x="5" y="4" width="10" height="12" rx="1" fill="#fff" />
        <path d="M10 4 V16 M5 11 H10 M10 8.500 H15" stroke="#12a344" strokeWidth="1.200" />
      </g>
    ),
  },
];

function Task({ label, active, art }: { label: string; active?: boolean; art: React.ReactNode }) {
  return (
    <button
      aria-label={label}
      className={
        active
          ? "flex h-full w-10 items-center justify-center border-b-2 border-[#1a6fb5] bg-[#efefef] pt-0.5"
          : "flex h-full w-[33px] items-center justify-center border-b-2 border-[#1a6fb5] pt-0.5"
      }
    >
      <Ic>{art}</Ic>
    </button>
  );
}

export default function App() {
  return (
    <div className="grid h-screen grid-cols-[5fr_1fr] grid-rows-[5fr_1fr] overflow-hidden bg-white font-['Noto_Sans','Open_Sans',sans-serif] text-[9px] leading-3 text-[#1a1a1a]">
      <svg className="absolute size-0" aria-hidden="true">
        <defs>
          <linearGradient id="icoBlue" x1="0" y1="0" x2="1" y2="1">
            <stop offset="0" stopColor="#6a9ad4" />
            <stop offset="1" stopColor="#1f4a8c" />
          </linearGradient>
        </defs>
      </svg>
      <div className="flex min-h-0 min-w-0 flex-col bg-[#f0f0f0]">
        <header className="flex h-[18px] items-center bg-white pl-0.5">
          <Ic className="size-[14px]">
            <Fc />
          </Ic>
          <h1 className="ml-1 flex-1 pt-0.5">* Unbenannt - FreeCAD 1.0.0</h1>
          <div className="flex pr-0.5">
            <button aria-label="Minimieren" className="flex h-[18px] w-[38px] items-center justify-center">
              <Ic box="0 0 10 10" className="size-[10px]">
                <path d="M1 5.500 H9" stroke="#222" />
              </Ic>
            </button>
            <button aria-label="Verkleinern" className="flex h-[18px] w-[38px] items-center justify-center">
              <Ic box="0 0 10 10" className="size-[10px]">
                <path d="M1.500 3.500 H7.500 V9.500 H1.500 Z M3.500 3.500 V1.500 H9.500 V7.500 H7.500" fill="none" stroke="#222" />
              </Ic>
            </button>
            <button aria-label="Schließen" className="flex h-[18px] w-[38px] items-center justify-center">
              <Ic box="0 0 10 10" className="size-[10px]">
                <path d="M1 1 L9 9 M9 1 L1 9" stroke="#222" />
              </Ic>
            </button>
          </div>
        </header>
        <nav className="flex h-[18px] items-center gap-[14px] bg-white pt-0.5 pl-[7px]">
          {menus.map((m) => (
            <button key={m}>{m}</button>
          ))}
        </nav>

        <div className="flex h-[29px] shrink-0 border-t border-b border-t-[#e4e4e4] border-b-[#b9b9b9]">
          <Group>
            <Tool n="new" label="Neu" />
            <Tool n="open" label="Öffnen" />
            <Tool n="save" label="Speichern" />
          </Group>
          <Group>
            <Tool n="undo" label="Rückgängig" arrow />
            <Tool n="redo" label="Wiederherstellen" arrow dim />
            <Sep />
            <Tool n="refresh" label="Aktualisieren" />
          </Group>
          <Group>
            <div className="relative flex items-center">
              <select aria-label="Arbeitsbereich" className="h-[19px] w-[122px] appearance-none border border-[#b4b4b4] bg-[#e2e2e2] pl-[18px] text-[9px]">
                <option>Part</option>
              </select>
              <Ic className="pointer-events-none absolute left-1 size-[14px]">
                <CubeShape />
              </Ic>
              <Ic box="0 0 8 8" className="pointer-events-none absolute right-[3px] size-2">
                <path d="M1 2.500 L4 5.500 L7 2.500" fill="none" stroke="#555" />
              </Ic>
            </div>
          </Group>
          <Group>
            <Tool n="fit" label="Alles anzeigen" />
            <Tool n="fitsel" label="Auswahl anzeigen" />
            <Tool n="iso" label="Isometrisch" arrow />
            <Tool n="viewsel" label="Ansicht ausrichten" />
            <Sep />
            <Tool n="noentry" label="Darstellungsart" arrow />
            <Tool n="boxsel" label="Auswahlfilter" arrow />
            <Tool n="sync" label="Ansicht synchronisieren" arrow />
            <Tool n="caliper" label="Messen" />
          </Group>
          <Group pad>
            <Tool n="whats" label="Direkthilfe" />
          </Group>
          <Group>
            <Tool n="part" label="Part erstellen" />
            <Tool n="folder" label="Gruppe erstellen" />
            <Tool n="link" label="Verknüpfung" arrow />
            <Tool n="braces" label="Variablensatz" />
          </Group>
          <Group pad>
            <Tool n="pcube" label="Würfel" />
            <Tool n="cyl" label="Zylinder" />
            <Tool n="sphere" label="Kugel" />
            <Tool n="cone" label="Kegel" />
            <Tool n="torus" label="Torus" />
            <Tool n="cyl" label="Rohr" />
            <Tool n="prims" label="Grundkörper" />
            <Tool n="shapebuilder" label="Formgenerator" />
          </Group>
          <Group last>
            <Tool n="sketch" label="Skizze" />
            <Tool n="extrude" label="Extrudieren" />
            <Tool n="revolve" label="Drehen" />
            <Tool n="mirror" label="Spiegeln" />
            <Tool n="scale" label="Skalieren" />
            <Tool n="fillet" label="Verrunden" />
            <Tool n="chamfer" label="Fase" />
            <Tool n="face" label="Fläche" />
            <Tool n="ruled" label="Regelfläche" />
            <Tool n="loft" label="Loft" />
            <Tool n="sweep" label="Sweep" />
            <Tool n="section" label="Schnitt" />
            <Tool n="cross" label="Querschnitte" />
            <Tool n="offset" label="Versatz" arrow dim />
            <Tool n="thick" label="Dicke" />
            <Tool n="projface" label="Projektion" />
            <Tool n="gcube" label="Farbe je Fläche" />
          </Group>
        </div>
        <div className="flex h-7 shrink-0 border-b border-[#b9b9b9]">
          <Group last>
            <Tool n="compound" label="Verbund" arrow />
            <Tool n="boolean" label="Boolesche Verknüpfung" />
            <Tool n="cut" label="Ausschneiden" />
            <Tool n="union" label="Vereinigung" />
            <Tool n="common" label="Schnittmenge" />
            <Tool n="pipe" label="Verbinden" arrow />
            <Tool n="split" label="Aufteilen" arrow />
            <Tool n="check" label="Geometrie prüfen" />
            <Tool n="defeature" label="Formelemente entfernen" />
          </Group>
        </div>

        <main className="flex min-h-0 flex-1">
          <aside className="flex w-[392px] shrink-0 flex-col">
            <div className="mr-[3px] flex h-[18px] shrink-0 items-end border-b border-[#a8a8a8] pl-0.5">
              <button className="h-4 w-14 border border-b-0 border-[#dadada] bg-[#ebebeb] pt-px">Aufgaben</button>
              <button className="h-[17px] w-[46px] bg-white">Modell</button>
            </div>
            <div className="flex h-3 shrink-0 items-center pr-[6px]">
              <h2 className="flex-1 pt-px pl-1 text-center">Modell</h2>
              <div className="flex items-center gap-2 text-[#777]">
                <button aria-label="Einklappen">
                  <Ic box="0 0 8 8" className="size-2">
                    <path d="M1.500 1.500 H6.500 V6.500 H1.500 Z M1.500 3.500 H6.500" fill="none" stroke="#999" />
                  </Ic>
                </button>
                <button aria-label="Abdocken">
                  <Ic box="0 0 8 8" className="size-2">
                    <path d="M1.500 3.500 H5.500 V6.500 H1.500 Z M3 3 V1.500 H7 V5 H5.500" fill="none" stroke="#888" />
                  </Ic>
                </button>
                <button aria-label="Schließen">
                  <Ic box="0 0 8 8" className="size-2">
                    <path d="M1 1 L7 7 M7 1 L1 7" stroke="#555" strokeWidth="1.300" />
                  </Ic>
                </button>
              </div>
            </div>
            <div className="mr-[3px] flex-[335] border border-[#999] bg-white">
              <table className="w-full table-fixed border-collapse">
                <colgroup>
                  <col className="w-[156px]" />
                  <col className="w-[70px]" />
                  <col />
                </colgroup>
                <thead>
                  <tr className="h-5 text-left">
                    <th className="border-r border-[#ececec] pl-[3px] font-normal whitespace-nowrap">Bezeichnungen &amp; Eigenschaften</th>
                    <th className="border-r border-[#ececec] pl-[3px] font-normal">Beschreibung</th>
                    <th className="pl-[3px] font-normal">Interner Name</th>
                  </tr>
                </thead>
                <tbody>
                  <tr className="h-4">
                    <td>
                      <div className="flex items-center pl-1">
                        <Ic box="0 0 8 8" className="size-2">
                          <path d="M1 2.500 L4 5.500 L7 2.500" fill="none" stroke="#333" strokeWidth="1.300" />
                        </Ic>
                        <Ic className="mr-[6px] ml-2 size-3">
                          <Doc />
                        </Ic>
                        <b>Unbenannt</b>
                      </div>
                    </td>
                    <td />
                    <td />
                  </tr>
                  <tr className="h-[17px]">
                    <td>
                      <div className="flex items-center pl-5">
                        <Ic box="0 0 8 8" className="size-2">
                          <path d="M2.500 1 L5.500 4 L2.500 7" fill="none" stroke="#888" strokeWidth="1.200" />
                        </Ic>
                        <Ic box="0 0 12 12" className="ml-2 size-3">
                          <path d="M1 6 Q6 0.500 11 6 Q6 11.500 1 6 Z" fill="#fff" stroke="#111" strokeWidth="1.200" />
                          <circle cx="6" cy="5.800" r="2" fill="#111" />
                        </Ic>
                        <Ic className="mr-[5px] ml-[6px] size-[14px]">
                          <circle cx="7.500" cy="13" r="6.500" fill="#3a73b8" stroke={D} strokeWidth="0.800" />
                          <circle cx="13" cy="7" r="6" fill="#f8f8f8" stroke="#a8a8a8" />
                        </Ic>
                        Cut022
                      </div>
                    </td>
                    <td />
                    <td className="pl-[3px]">Cut022</td>
                  </tr>
                </tbody>
              </table>
            </div>
            <div className="mt-[5px] mr-[6px] ml-0.5 flex-[360] border border-[#999] bg-white" />
            <div className="flex h-[19px] shrink-0 items-start pt-px pl-0.5">
              <button className="h-[17px] w-[46px] border border-t-0 border-[#dadada] bg-[#ebebeb] pt-px">Ansicht</button>
              <button className="h-[18px] w-[45px] bg-white pt-px">Daten</button>
            </div>
          </aside>

          <section className="flex min-w-0 flex-1 flex-col">
            <div className="relative flex-1 bg-[#66668a]">
              <Scene />
            </div>
            <div className="flex h-[19px] shrink-0 items-start pl-0.5 font-['Open_Sans','Noto_Sans',sans-serif]">
              <div className="flex h-[18px] w-[71px] items-center border-b border-[#cfcfcf] pl-2">
                <Ic className="size-[14px]">
                  <Fc />
                </Ic>
                <button className="ml-[3px]">Start</button>
                <button aria-label="Start schließen" className="ml-1">
                  <Ic box="0 0 12 12" className="size-3">
                    <rect x="0.500" y="0.500" width="11" height="11" rx="1.500" fill="#bdbdbd" />
                    <path d="M3.500 3.500 L8.500 8.500 M8.500 3.500 L3.500 8.500" stroke="#fff" strokeWidth="1.800" />
                  </Ic>
                </button>
              </div>
              <div className="flex h-[19px] w-[116px] items-center bg-white pl-[11px]">
                <Ic className="size-3">
                  <Doc />
                </Ic>
                <button className="ml-[3px] whitespace-nowrap">Unbenannt : 1*</button>
                <button aria-label="Unbenannt schließen" className="ml-1">
                  <Ic box="0 0 12 12" className="size-3">
                    <rect x="0.500" y="0.500" width="11" height="11" rx="1.500" fill="#d2603f" stroke="#a8442a" />
                    <path d="M3.500 3.500 L8.500 8.500 M8.500 3.500 L3.500 8.500" stroke="#fff" strokeWidth="1.800" />
                  </Ic>
                </button>
              </div>
            </div>
          </section>
        </main>

        <footer className="flex h-[25px] shrink-0 items-center pl-px font-['Open_Sans','Noto_Sans',sans-serif]">
          <p className="flex-1">Preselected: Unnamed.Cut022.Edge14 (30.70 mm, 4.31 mm, 4.00 mm)</p>
          <div className="flex h-5 items-center">
            <div className="flex h-5 w-[11px] justify-between border-x border-[#d6d6d6]">
              <div className="mx-auto w-px bg-[#d6d6d6]" />
            </div>
            <button className="flex w-[66px] items-center pl-[7px]">
              <span className="mr-1 size-3 bg-[#3d69a8]" />8<span className="flex-1" />
              <span className="mr-[6px]">
                <Arrow />
              </span>
            </button>
            <button className="flex h-5 w-[69px] items-center border-x border-[#d6d6d6] pl-[17px]">
              <Ic box="0 0 10 12" className="h-3 w-[10px]">
                <rect x="1.500" y="1" width="7" height="10" rx="3.500" fill="none" stroke="#333" />
                <path d="M5 1 V5" stroke="#333" />
              </Ic>
              <span className="ml-0.5 flex-1 text-left">CAD</span>
              <span className="mr-[7px]">
                <Arrow />
              </span>
            </button>
            <button className="flex w-[118px] items-center justify-end gap-0.5 pr-[7px] whitespace-nowrap">
              187,66 mm x 113,32 mm
              <Arrow />
            </button>
          </div>
        </footer>

        <div className="flex h-[33px] shrink-0 items-center bg-[#d6d6d6]">
          <button aria-label="Start" className="flex h-full w-[41px] items-center justify-center">
            <Ic box="0 0 14 14" className="size-[14px]">
              <path d="M0 2 L6 1.200 V6.600 H0 Z M6.800 1 L14 0 V6.600 H6.800 Z M0 7.400 H6 V12.800 L0 12 Z M6.800 7.400 H14 V14 L6.800 13 Z" fill="#000" />
            </Ic>
          </button>
          <label className="flex h-[31px] w-[238px] items-center bg-white pl-2">
            <Ic box="0 0 15 15" className="size-[15px]">
              <circle cx="9" cy="6" r="4.700" fill="none" stroke="#222" strokeWidth="1.200" />
              <path d="M5.600 9.400 L1 14" stroke="#222" strokeWidth="1.200" />
            </Ic>
            <input type="text" aria-label="Suchen" placeholder="Suchen" className="ml-[9px] w-40 text-[11px] leading-4 outline-none placeholder:text-[#444]" />
          </label>
          <button aria-label="Taskansicht" className="mr-1 flex h-full w-[42px] items-center justify-center">
            <Ic box="0 0 15 13" className="h-[13px] w-[15px]">
              <path d="M1.500 3.500 H9.500 V9.500 H1.500 Z M1.500 0 V1.500 H9.500 V0 M1.500 13 V11.500 H9.500 V13 M12.500 0 V13" fill="none" stroke="#222" />
              <path d="M11.500 3 H14 V5.500 H11.500 Z" fill="#222" />
            </Ic>
          </button>
          <div className="mr-[5px] flex h-full gap-2">
            {apps.map((a) => (
              <Task key={a.label} label={a.label} art={a.art} />
            ))}
          </div>
          <Task label="FreeCAD" active art={<Fc />} />
          <div className="flex-1" />
          <button className="flex h-full items-center text-[11px] leading-3 whitespace-nowrap">
            <Ic box="0 0 20 20" className="mr-1.5 size-5">
              <path d="M4 12 Q9 15 12 9 Q17 11 14 16 Q9 20 4 12 Z" fill="#f3a42c" />
              <path d="M1 9 Q1 5.500 4.500 5.500 Q6 2.500 9 4 Q12 4 12 9 Z" fill="#a9cdf4" stroke="#6ea3dc" strokeWidth="0.600" />
              <path d="M8 18.500 Q8 14.500 11.500 15 Q13 11.500 16 14 Q19.500 14 19.500 18.500 Z" fill="#d6e6fa" stroke="#8db6e2" strokeWidth="0.600" />
              <circle cx="15" cy="5" r="4.800" fill="#c42b1c" />
              <text x="13" y="8" fontSize="8" fill="#fff">7</text>
            </Ic>
            <span className="mr-2">21°C</span>
            <span>Teilw. bewölkt</span>
          </button>
          <div className="ml-5 flex items-center gap-[9px]">
            <button aria-label="Ausgeblendete Symbole">
              <Ic box="0 0 12 12" className="size-3">
                <path d="M1.500 8.500 L6 4 L10.500 8.500" fill="none" stroke="#222" strokeWidth="1.200" />
              </Ic>
            </button>
            <button aria-label="Besprechung">
              <Ic box="0 0 12 14" className="h-[14px] w-3">
                <path d="M1.500 4.500 H8 V10.500 H1.500 Z M8 6.500 L10.500 5.500 V9.500 L8 8.500 M2 1.500 H8 M2 13 H8" fill="none" stroke="#222" strokeWidth="1.200" />
              </Ic>
            </button>
            <button aria-label="WLAN">
              <Ic box="0 0 12 12" className="size-3">
                <path d="M1 11 A10 10 0 0 1 11 1.500 M4 11 A7 7 0 0 1 11 4.500 M7 11 A4 4 0 0 1 11 7.500" fill="none" stroke="#444" />
                <circle cx="10" cy="10.500" r="1.200" fill="#222" />
              </Ic>
            </button>
            <button aria-label="Lautstärke" className="-ml-1">
              <Ic box="0 0 15 12" className="h-3 w-[15px]">
                <path d="M1 4.500 H3 L6 1.500 V10.500 L3 7.500 H1 Z M8 4 Q9.300 6 8 8 M10 3 Q12 6 10 9 M12 2 Q14.600 6 12 10" fill="none" stroke="#222" />
              </Ic>
            </button>
          </div>
          <button className="ml-1 flex w-[50px] flex-col items-center pb-0.5 text-[9px] leading-[15px]">
            <span>22:11</span>
            <span>14.08.2025</span>
          </button>
          <button aria-label="Benachrichtigungen" className="ml-3 flex h-full w-8 items-center pt-0.5">
            <Ic box="0 0 22 20" className="h-5 w-[22px]">
              <path d="M1 2 H14 V13 H9 L6 15.500 V13 H1 Z" fill="#111" />
              <path d="M3 5 H12 M3 7.500 H12 M3 10 H9" stroke="#d6d6d6" />
              <circle cx="14.500" cy="13.500" r="6" fill="#d6d6d6" stroke="#555" strokeWidth="0.800" />
              <text x="12.200" y="16.800" fontSize="9" fill="#111">5</text>
            </Ic>
          </button>
          <div className="mr-0.5 h-full w-px bg-[#a8a8a8]" />
        </div>
      </div>
    </div>
  );
}
